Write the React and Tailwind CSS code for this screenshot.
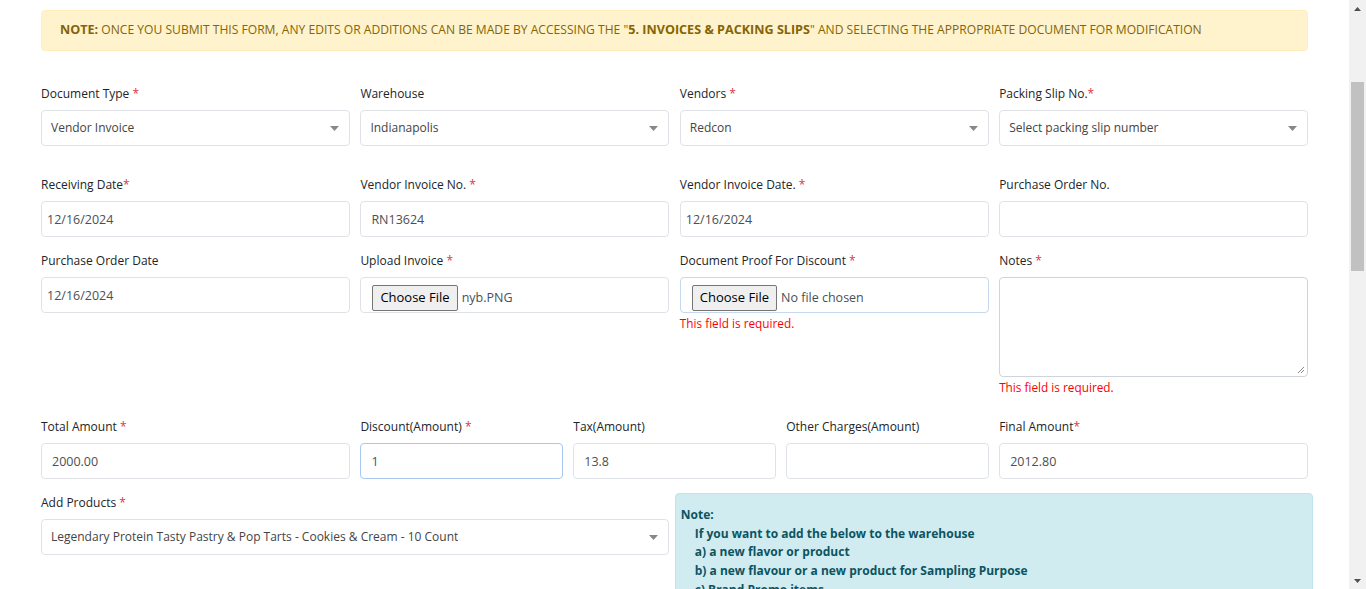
import React from 'react';

const font = { fontFamily: '"Open Sans", "Noto Sans", sans-serif' };

const Req = () => <span className="text-[#dc3545]"> *</span>;

const Label = ({ children, req, tight }) => (
  <div className="h-[21px] leading-[22px] mb-[6px] text-[12px] text-[#212529] whitespace-nowrap">
    {children}
    {req && (tight ? <span className="text-[#dc3545]">*</span> : <Req />)}
  </div>
);

const Caret = () => (
  <svg width="9" height="5" viewBox="0 0 9 5" className="shrink-0">
    <path d="M0 0h9L4.5 5z" fill="#888" />
  </svg>
);

const Select = ({ value }) => (
  <div className="h-[36px] border border-[#dfe3e8] rounded-[4px] bg-white flex items-center justify-between pl-[9px] pr-[10px] text-[12px] text-[#444]">
    <span className="truncate">{value}</span>
    <Caret />
  </div>
);

const Input = ({ value, date, focus }) => (
  <div
    className={
      'h-[36px] border rounded-[4px] bg-white flex items-center pt-[2px] text-[12.5px] text-[#495057] ' +
      (date ? 'px-[5px] ' : 'px-[10px] ') +
      (focus ? 'border-[#a8c8f0]' : 'border-[#dfe3e8]')
    }
  >
    {value}
  </div>
);

const FileInput = ({ name, focus }) => (
  <div
    className={
      'h-[36px] border rounded-[4px] bg-white flex items-start pt-[7px] pl-[11px] text-[12.5px] text-[#495057] ' +
      (focus ? 'border-[#c5d8ee]' : 'border-[#dfe3e8]')
    }
  >
    <span className="h-[26px] px-[7px] flex items-center bg-[#efefef] border border-[#767676] rounded-[2px] text-[13px] text-black">
      Choose File
    </span>
    <span className="ml-[4px] h-[26px] leading-[26px]">{name}</span>
  </div>
);

const Err = () => (
  <div className="mt-px leading-[18px] text-[11.8px] text-[#ff0000]">This field is required.</div>
);

const ScrollArrow = ({ up }) => (
  <div className="h-[17px] flex items-center justify-center">
    <svg width="7" height="4" viewBox="0 0 7 4">
      <path d={up ? 'M0 4h7L3.5 0z' : 'M0 0h7L3.5 4z'} fill="#505050" />
    </svg>
  </div>
);

export default function App() {
  return (
    <div className="h-[589px] flex overflow-hidden bg-white" style={font}>
      <div className="flex-1 px-[41px] pt-[10px]">
        <div className="h-[41px] bg-[#fff3cd] border border-[#ffeeba] rounded-[4px] flex items-center pl-[18px] text-[12.1px] text-[#856404] whitespace-nowrap">
          <b className="font-bold text-[12.6px]">NOTE:</b>
          <span>&nbsp;ONCE YOU SUBMIT THIS FORM, ANY EDITS OR ADDITIONS CAN BE MADE BY ACCESSING THE "</span>
          <b className="font-bold text-[12.6px]">5. INVOICES &amp; PACKING SLIPS</b>
          <span>" AND SELECTING THE APPROPRIATE DOCUMENT FOR MODIFICATION</span>
        </div>

        <div className="grid grid-cols-4 gap-x-[10.5px] mt-[32px]">
          <div>
            <Label req>Document Type</Label>
            <Select value="Vendor Invoice" />
          </div>
          <div>
            <Label>Warehouse</Label>
            <Select value="Indianapolis" />
          </div>
          <div>
            <Label req>Vendors</Label>
            <Select value="Redcon" />
          </div>
          <div>
            <Label req tight>Packing Slip No.</Label>
            <Select value="Select packing slip number" />
          </div>
        </div>

        <div className="grid grid-cols-4 gap-x-[10.5px] mt-[28px]">
          <div>
            <Label req tight>Receiving Date</Label>
            <Input value="12/16/2024" date />
          </div>
          <div>
            <Label req>Vendor Invoice No.</Label>
            <Input value="RN13624" />
          </div>
          <div>
            <Label req>Vendor Invoice Date.</Label>
            <Input value="12/16/2024" date />
          </div>
          <div>
            <Label>Purchase Order No.</Label>
            <Input value="" />
          </div>
        </div>

        <div className="grid grid-cols-4 gap-x-[10.5px] mt-[13px]">
          <div>
            <Label>Purchase Order Date</Label>
            <Input value="12/16/2024" date />
          </div>
          <div>
            <Label req>Upload Invoice</Label>
            <FileInput name="nyb.PNG" />
          </div>
          <div>
            <Label req>Document Proof For Discount</Label>
            <FileInput name="No file chosen" focus />
            <Err />
          </div>
          <div>
            <Label req>Notes</Label>
            <div className="h-[100px] border border-[#cfd4da] rounded-[4px] bg-white flex items-end justify-end p-[2px]">
              <svg width="8" height="8" viewBox="0 0 8 8">
                <path d="M7 1L1 7M7 4L4 7" stroke="#888" strokeWidth="1" />
              </svg>
            </div>
            <Err />
          </div>
        </div>

        <div className="grid grid-cols-4 gap-x-[10.5px] mt-[20px]">
          <div>
            <Label req>Total Amount</Label>
            <Input value="2000.00" />
          </div>
          <div className="col-span-2 grid grid-cols-3 gap-x-[10.5px]">
            <div>
              <Label req>Discount(Amount)</Label>
              <Input value="1" focus />
            </div>
            <div>
              <Label>Tax(Amount)</Label>
              <Input value="13.8" />
            </div>
            <div>
              <Label>Other Charges(Amount)</Label>
              <Input value="" />
            </div>
          </div>
          <div>
            <Label req tight>Final Amount</Label>
            <Input value="2012.80" />
          </div>
        </div>

        <div className="grid grid-cols-4 gap-x-[10.5px] mt-[13px]">
          <div className="col-span-2">
            <Label req>Add Products</Label>
            <Select value="Legendary Protein Tasty Pastry & Pop Tarts - Cookies & Cream - 10 Count" />
          </div>
          <div className="col-span-2 -mx-[5px] mt-px bg-[#d1ecf1] border border-[#bee5eb] rounded-[4px] pl-[5px] pt-[12px] pb-[12px] text-[12px] font-bold text-[#0c5460] leading-[18.7px]">
            <div>Note:</div>
            <div className="pl-[14px]">
              <div>If you want to add the below to the warehouse</div>
              <div>a) a new flavor or product</div>
              <div>b) a new flavour or a new product for Sampling Purpose</div>
              <div>c) Brand Promo items</div>
              <div>please contact the admin before submitting the invoice.</div>
            </div>
          </div>
        </div>
      </div>

      <div className="w-[17px] bg-[#f1f1f1] flex flex-col">
        <ScrollArrow up />
        <div className="h-[65px]" />
        <div className="h-[189px] mx-[2px] bg-[#c1c1c1]" />
        <div className="flex-1" />
        <ScrollArrow />
      </div>
    </div>
  );
}
